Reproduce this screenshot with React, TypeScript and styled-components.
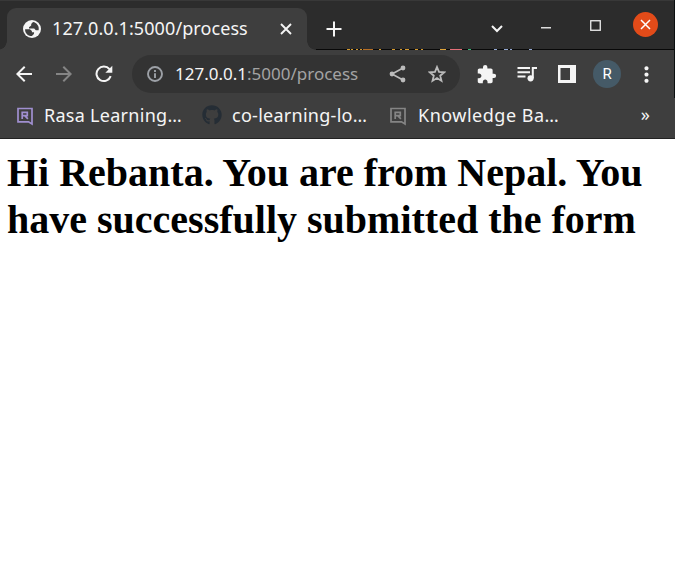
import React from "react";
import styled, { createGlobalStyle } from "styled-components";
import { MdArrowBack, MdArrowForward, MdExtension, MdMoreVert } from "react-icons/md";
import { FaGithub } from "react-icons/fa";

const GlobalStyle = createGlobalStyle`
  * { box-sizing: border-box; }
  body { margin: 0; background: #fff; overflow: hidden; }
  svg { display: block; flex: none; }
`;

const Window = styled.div`
  width: 675px;
  height: 577px;
  background: #fff;
  font-family: "Noto Sans", "Open Sans", sans-serif;
  color: #f5f5f5;
`;

const TabStrip = styled.header`
  display: flex;
  height: 50px;
  padding: 8px 0 0 7px;
  background: linear-gradient(#383838 0 1px, #2c2c2c 1px 49px, #080808 49px);
  position: relative;
`;

const Tab = styled.div`
  display: flex;
  align-items: center;
  position: relative;
  width: 300px;
  height: 42px;
  padding: 0 0 1px 15px;
  border-radius: 9px 9px 0 0;
  background: #3e3e3e;
  &::before, &::after {
    content: "";
    position: absolute;
    bottom: 0;
    width: 9px;
    height: 9px;
  }
  &::before { left: -9px; background: radial-gradient(circle at 0 0, #2c2c2c 8.5px, #3e3e3e 9px); }
  &::after { right: -9px; background: radial-gradient(circle at 100% 0, #2c2c2c 8.5px, #3e3e3e 9px); }
`;

const Label = styled.span<{ $width: number; $size: number; $spacing?: number; $gap?: number }>`
  flex: none;
  width: ${(p) => p.$width}px;
  margin-left: ${(p) => p.$gap ?? 0}px;
  font-size: ${(p) => p.$size}px;
  letter-spacing: ${(p) => p.$spacing ?? 0}px;
  line-height: 26px;
  white-space: nowrap;
`;

const TabTitle = styled(Label)`
  margin-bottom: 2px;
`;

const IconSlot = styled.span<{ $width: number; $color?: string }>`
  display: flex;
  flex: none;
  align-items: center;
  justify-content: center;
  width: ${(p) => p.$width}px;
  color: ${(p) => p.$color ?? "#f5f5f5"};
`;

const WindowButtons = styled.div`
  display: flex;
  margin-left: auto;
  height: 34px;
  padding-right: 5px;
`;

const CloseButton = styled.span`
  display: grid;
  place-items: center;
  width: 25px;
  height: 25px;
  margin: 4px 12px 0 12px;
  border-radius: 50%;
  background: #e24b19;
`;

const Backdrop = styled.svg`
  position: absolute;
  left: 347px;
  top: 49px;
`;

const Toolbar = styled.nav`
  display: flex;
  height: 48px;
  align-items: center;
  padding-left: 4px;
  background: #3e3e3e;
`;

const AddressBar = styled.div`
  display: flex;
  flex: none;
  align-items: center;
  width: 328px;
  height: 38px;
  margin-left: 8px;
  padding-left: 12px;
  border-radius: 19px;
  background: #333;
`;

const Path = styled.span`
  color: #a3a3a3;
`;

const Avatar = styled.span`
  display: grid;
  place-items: center;
  width: 28px;
  height: 28px;
  border-radius: 50%;
  background: #455a67;
  color: #fff;
  font: 15px/28px Roboto, sans-serif;
`;

const Bookmarks = styled.div`
  display: flex;
  align-items: center;
  height: 41px;
  padding: 0 0 6px 15px;
  background: #3e3e3e;
  border-bottom: 1px solid #222;
`;

const BookmarkIcon = styled(IconSlot)`
  padding-top: 2px;
`;

const More = styled.span`
  margin: 0 25px 2px auto;
  font-size: 18px;
  line-height: 24px;
`;

const Edge = styled.div`
  position: absolute;
  left: 674px;
  top: 0;
  width: 1px;
  height: 98px;
  background: #0b0f10;
`;

const Page = styled.main`
  padding: 10px 0 0 7px;
  color: #000;
`;

const Heading = styled.h1`
  margin: 0;
  font: bold 40px/47px "Liberation Serif", serif;
  white-space: nowrap;
`;

const RasaIcon = ({ color }: { color: string }) => (
  <svg width="18" height="20" viewBox="0 0 18 20" fill="none" stroke={color} strokeWidth="1.7">
    <path d="M2 2.5h14v15.5l-3.5-2.2H2z" />
    <path d="M6.2 12.9V6.3h5.1v3.4H6.2m2.5 0 3.2 3.2" />
  </svg>
);

const GlobeIcon = () => (
  <svg width="18" height="18" viewBox="0 0 18 18">
    <circle cx="9" cy="9" r="9" fill="#f5f5f5" />
    <path fill="#3e3e3e" d="M10 2.1 8.2 4v1.5L6 7.2v1.3h5.2l1.6 1.7h2.8c1-3.7-1.8-7.5-5.6-8.1M2.1 9.2h4.8l2 1.8v1.2h2.2l-.2 1.8-2 2.1C5 16.3 1.8 13 2.1 9.2" />
  </svg>
);

const CrossIcon = () => (
  <svg width="12" height="12" stroke="currentColor" strokeWidth="1.9"><path d="m1 1 10 10m0-10L1 11" /></svg>
);

const PlusIcon = () => (
  <svg width="16" height="16" stroke="currentColor" strokeWidth="2"><path d="M8 .5v15M.5 8h15" /></svg>
);

const InfoIcon = () => (
  <svg width="16" height="16" viewBox="0 0 16 16" fill="none" stroke="currentColor" strokeWidth="1.9">
    <circle cx="8" cy="8" r="7" /><path d="M8 7.2V12M8 4v1.9" />
  </svg>
);

const ShareIcon = () => (
  <svg width="17" height="18" viewBox="0 0 17 18" fill="currentColor">
    <path d="m3 9 11-6m-11 6 11 6" stroke="currentColor" strokeWidth="1.6" />
    <circle cx="3" cy="9" r="2.4" /><circle cx="14" cy="3" r="2.4" /><circle cx="14" cy="15" r="2.4" />
  </svg>
);

const StarIcon = () => (
  <svg width="18" height="18" viewBox="0 0 18 18" fill="none" stroke="currentColor" strokeWidth="1.8">
    <path d="m9 2 2 4.9 5.3.4-4.1 3.4 1.3 5.2L9 13.1l-4.5 2.8 1.3-5.2-4.1-3.4L7 6.9z" />
  </svg>
);

const QueueIcon = () => (
  <svg width="20" height="18" viewBox="0 0 20 18" fill="none" stroke="currentColor" strokeWidth="2">
    <path d="M.5 3H13M.5 7.3H13M.5 11.6h8M15.8 13V3H20" />
    <circle cx="13.6" cy="13.3" r="3.1" fill="currentColor" stroke="none" />
  </svg>
);

const ReloadIcon = () => (
  <svg width="18" height="18" viewBox="0 0 18 18">
    <path d="M15.7 11.2A7.3 7.3 0 1 1 14.5 4.2" fill="none" stroke="currentColor" strokeWidth="2" />
    <path d="M17.3.8v7h-7z" fill="currentColor" />
  </svg>
);

const fragments: [number, number, string][] = [
  [0, 3, "#d69a2d"], [4, 2, "#d69a2d"], [9, 2, "#d69a2d"], [13, 2, "#d69a2d"],
  [16, 10, "#b76e24"], [32, 2, "#d69a2d"], [45, 3, "#d69a2d"], [53, 2, "#d69a2d"],
  [58, 4, "#d69a2d"], [68, 3, "#d69a2d"], [74, 2, "#d69a2d"], [93, 6, "#e2a53a"],
  [103, 12, "#e56f78"], [121, 3, "#35b979"], [147, 3, "#94a9d4"], [157, 4, "#94a9d4"],
  [163, 2, "#94a9d4"], [182, 3, "#94a9d4"],
];

export default function App() {
  return (
    <Window>
      <GlobalStyle />
      <TabStrip>
        <Backdrop width="190" height="1">
          {fragments.map(([x, w, fill]) => <rect key={x} x={x} width={w} height="1" fill={fill} />)}
        </Backdrop>
        <Tab>
          <IconSlot $width={20}><GlobeIcon /></IconSlot>
          <TabTitle $width={196} $size={18} $spacing={0.08} $gap={10}>127.0.0.1:5000/process</TabTitle>
          <IconSlot $width={76}><CrossIcon /></IconSlot>
        </Tab>
        <IconSlot $width={54}><PlusIcon /></IconSlot>
        <WindowButtons>
          <IconSlot $width={50}>
            <svg width="14" height="10" viewBox="0 0 14 10" fill="none" stroke="currentColor" strokeWidth="2" transform="translate(0 4)"><path d="m2 2 5 5 5-5" /></svg>
          </IconSlot>
          <IconSlot $width={48}>
            <svg width="10" height="2" transform="translate(0 3)"><rect width="10" height="1.5" fill="#ddd" /></svg>
          </IconSlot>
          <IconSlot $width={51}>
            <svg width="11" height="11"><rect x=".75" y=".75" width="9.5" height="9.5" fill="none" stroke="#f0f0f0" strokeWidth="1.3" /></svg>
          </IconSlot>
          <CloseButton>
            <svg width="11" height="11" stroke="#fff" strokeWidth="1.5"><path d="m1 1 9 9m0-9-9 9" /></svg>
          </CloseButton>
        </WindowButtons>
        <Edge />
      </TabStrip>
      <Toolbar>
        <IconSlot $width={40}><MdArrowBack size={24} /></IconSlot>
        <IconSlot $width={40} $color="#858585"><MdArrowForward size={24} /></IconSlot>
        <IconSlot $width={40}><ReloadIcon /></IconSlot>
        <AddressBar>
          <IconSlot $width={21} $color="#9da1a7"><InfoIcon /></IconSlot>
          <Label $width={211} $size={17} $gap={10}>127.0.0.1<Path>:5000/process</Path></Label>
          <IconSlot $width={22} $color="#bbb"><ShareIcon /></IconSlot>
          <IconSlot $width={58} $color="#bbb"><StarIcon /></IconSlot>
        </AddressBar>
        <IconSlot $width={53}><MdExtension size={21} /></IconSlot>
        <IconSlot $width={27}><QueueIcon /></IconSlot>
        <IconSlot $width={53}>
          <svg width="18" height="18"><path fill="currentColor" fillRule="evenodd" d="M0 0h18v18H0zM2.5 3v12H12V3z" /></svg>
        </IconSlot>
        <IconSlot $width={28}><Avatar>R</Avatar></IconSlot>
        <IconSlot $width={51}><MdMoreVert size={25} /></IconSlot>
      </Toolbar>
      <Bookmarks>
        <BookmarkIcon $width={20}><RasaIcon color="#a08fd0" /></BookmarkIcon>
        <Label $width={138} $size={18} $spacing={0.28} $gap={9}>Rasa Learning…</Label>
        <IconSlot $width={60} $color="#252d35"><FaGithub size={20} /></IconSlot>
        <Label $width={136} $size={18} $spacing={0.27} $gap={-10}>co-learning-lo…</Label>
        <BookmarkIcon $width={60}><RasaIcon color="#858585" /></BookmarkIcon>
        <Label $width={142} $size={18} $spacing={0.5} $gap={-10}>Knowledge Ba…</Label>
        <More>»</More>
      </Bookmarks>
      <Page>
        <Heading>Hi Rebanta. You are from Nepal. You<br />have successfully submitted the form</Heading>
      </Page>
    </Window>
  );
}
